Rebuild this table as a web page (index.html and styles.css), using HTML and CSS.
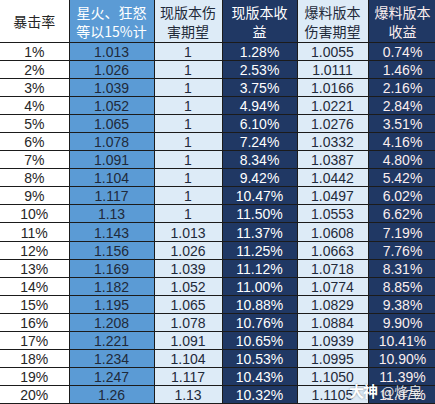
FILE: index.html
```html
<!DOCTYPE html>
<html lang="zh">
<head>
<meta charset="utf-8">
<link rel="stylesheet" href="styles.css">
</head>
<body>
<div class="sheet">
<table class="grid">
<colgroup>
<col class="c1"><col class="c2"><col class="c3"><col class="c4"><col class="c5"><col class="c6">
</colgroup>
<thead>
<tr class="head">
<th class="k1">暴击率</th>
<th class="k2">星火、狂怒<br>等以15%计</th>
<th class="k3">现版本伤<br>害期望</th>
<th class="k4">现版本收<br>益</th>
<th class="k5">爆料版本<br>伤害期望</th>
<th class="k6">爆料版本<br>收益</th>
</tr>
</thead>
<tbody>
<tr><td class="k1">1%</td><td class="k2">1.013</td><td class="k3">1</td><td class="k4">1.28%</td><td class="k5">1.0055</td><td class="k6">0.74%</td></tr>
<tr><td class="k1">2%</td><td class="k2">1.026</td><td class="k3">1</td><td class="k4">2.53%</td><td class="k5">1.0111</td><td class="k6">1.46%</td></tr>
<tr><td class="k1">3%</td><td class="k2">1.039</td><td class="k3">1</td><td class="k4">3.75%</td><td class="k5">1.0166</td><td class="k6">2.16%</td></tr>
<tr><td class="k1">4%</td><td class="k2">1.052</td><td class="k3">1</td><td class="k4">4.94%</td><td class="k5">1.0221</td><td class="k6">2.84%</td></tr>
<tr><td class="k1">5%</td><td class="k2">1.065</td><td class="k3">1</td><td class="k4">6.10%</td><td class="k5">1.0276</td><td class="k6">3.51%</td></tr>
<tr><td class="k1">6%</td><td class="k2">1.078</td><td class="k3">1</td><td class="k4">7.24%</td><td class="k5">1.0332</td><td class="k6">4.16%</td></tr>
<tr><td class="k1">7%</td><td class="k2">1.091</td><td class="k3">1</td><td class="k4">8.34%</td><td class="k5">1.0387</td><td class="k6">4.80%</td></tr>
<tr><td class="k1">8%</td><td class="k2">1.104</td><td class="k3">1</td><td class="k4">9.42%</td><td class="k5">1.0442</td><td class="k6">5.42%</td></tr>
<tr><td class="k1">9%</td><td class="k2">1.117</td><td class="k3">1</td><td class="k4">10.47%</td><td class="k5">1.0497</td><td class="k6">6.02%</td></tr>
<tr><td class="k1">10%</td><td class="k2">1.13</td><td class="k3">1</td><td class="k4">11.50%</td><td class="k5">1.0553</td><td class="k6">6.62%</td></tr>
<tr><td class="k1">11%</td><td class="k2">1.143</td><td class="k3">1.013</td><td class="k4">11.37%</td><td class="k5">1.0608</td><td class="k6">7.19%</td></tr>
<tr><td class="k1">12%</td><td class="k2">1.156</td><td class="k3">1.026</td><td class="k4">11.25%</td><td class="k5">1.0663</td><td class="k6">7.76%</td></tr>
<tr><td class="k1">13%</td><td class="k2">1.169</td><td class="k3">1.039</td><td class="k4">11.12%</td><td class="k5">1.0718</td><td class="k6">8.31%</td></tr>
<tr><td class="k1">14%</td><td class="k2">1.182</td><td class="k3">1.052</td><td class="k4">11.00%</td><td class="k5">1.0774</td><td class="k6">8.85%</td></tr>
<tr><td class="k1">15%</td><td class="k2">1.195</td><td class="k3">1.065</td><td class="k4">10.88%</td><td class="k5">1.0829</td><td class="k6">9.38%</td></tr>
<tr><td class="k1">16%</td><td class="k2">1.208</td><td class="k3">1.078</td><td class="k4">10.76%</td><td class="k5">1.0884</td><td class="k6">9.90%</td></tr>
<tr><td class="k1">17%</td><td class="k2">1.221</td><td class="k3">1.091</td><td class="k4">10.65%</td><td class="k5">1.0939</td><td class="k6">10.41%</td></tr>
<tr><td class="k1">18%</td><td class="k2">1.234</td><td class="k3">1.104</td><td class="k4">10.53%</td><td class="k5">1.0995</td><td class="k6">10.90%</td></tr>
<tr><td class="k1">19%</td><td class="k2">1.247</td><td class="k3">1.117</td><td class="k4">10.43%</td><td class="k5">1.1050</td><td class="k6">11.39%</td></tr>
<tr><td class="k1">20%</td><td class="k2">1.26</td><td class="k3">1.13</td><td class="k4">10.32%</td><td class="k5">1.1105</td><td class="k6">11.87%</td></tr>
</tbody>
</table>
<div class="mark"><span class="mark-big">大神</span><span class="mark-small">@烽皇</span></div>
</div>
</body>
</html>
```

FILE: styles.css
```css
html, body {
  margin: 0;
  padding: 0;
  background: #ffffff;
}

.sheet {
  position: relative;
  width: 435px;
  height: 404px;
  overflow: hidden;
}

.grid {
  border-collapse: collapse;
  table-layout: fixed;
  width: 437px;
  font-family: "Liberation Sans", "Noto Sans CJK SC", sans-serif;
  font-size: 14px;
  color: #262626;
}

.c1 { width: 69px; }
.c2 { width: 85px; }
.c3 { width: 68px; }
.c4 { width: 75px; }
.c5 { width: 71px; }
.c6 { width: 69px; }

.grid th,
.grid td {
  border: 1px solid #1b1b1b;
  padding: 0;
  text-align: center;
  white-space: nowrap;
  overflow: hidden;
}

.grid tr:first-child th { border-top: none; }
.grid th:first-child,
.grid td:first-child { border-left: none; }

.head {
  height: 42px;
}

.head th {
  font-family: "Noto Sans CJK SC", sans-serif;
  font-weight: 400;
  font-size: 14px;
  line-height: 19px;
  padding-top: 2px;
  vertical-align: middle;
}

.grid tbody tr {
  height: 18.1px;
}

.grid td {
  line-height: 14px;
  padding: 0 0 1px;
  vertical-align: bottom;
}

.k1 { background: #ffffff; color: #262626; }
.k2 { background: #5b9bd5; color: #1f2a3a; }
.k3 { background: #ddebf7; color: #1f2a3a; }
.k4 { background: #203864; color: #ffffff; }
.k5 { background: #ddebf7; color: #1f2a3a; }
.k6 { background: #203864; color: #fbeeee; }

.head .k2 { color: #ffffff; }

.mark {
  position: absolute;
  left: 349px;
  top: 380px;
  display: flex;
  align-items: flex-end;
  gap: 4px;
  font-family: "Noto Sans CJK SC", sans-serif;
  color: #ffffff;
  text-shadow: 0 0 2px rgba(0, 0, 0, 0.45);
  pointer-events: none;
}

.mark-big {
  font-size: 15px;
  font-weight: 700;
  line-height: 22px;
  letter-spacing: -1px;
}

.mark-small {
  font-size: 14px;
  line-height: 21px;
  color: rgba(255, 255, 255, 0.88);
}
```
